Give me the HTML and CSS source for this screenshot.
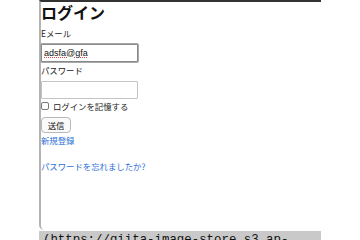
FILE: index.html
```html
<!DOCTYPE html>
<html lang="ja">
<head>
    <meta charset="UTF-8">
    <meta name="viewport" content="width=device-width, initial-scale=1.0">
    <title>ログイン</title>
    <link rel="stylesheet" href="styles.css">
</head>
<body>

    <div class="shot">
        <div class="frame">
            <h1>ログイン</h1>
            <form class="login-form">
                <label class="field-label" for="email">Eメール</label>
                <input type="text" id="email" class="text-input focused" value="adsfa@gfa">
                <label class="field-label" for="password">パスワード</label>
                <input type="password" id="password" class="text-input">
                <label class="remember">
                    <input type="checkbox" class="check">
                    <span>ログインを記憶する</span>
                </label>
                <button type="button" class="submit-btn">送信</button>
            </form>
            <a href="#" class="link signup">新規登録</a>
            <a href="#" class="link forgot">パスワードを忘れましたか?</a>
        </div>
        <div class="code-line">(https://qiita-image-store.s3.ap-</div>
    </div>

</body>
</html>
```

FILE: styles.css
```css
body {
    margin: 0;
    background-color: #fff;
    font-family: "Noto Sans CJK JP", "Noto Sans", sans-serif;
    color: #1a1a1a;
    overflow: hidden;
}
.shot {
    margin-left: 39px;
    width: 282px;
}
.frame {
    height: 230px;
    box-sizing: border-box;
    border-top: 2px solid #333;
    border-left: 2px solid #b4b4b4;
    border-bottom-left-radius: 5px;
    display: flex;
    flex-direction: column;
    align-items: flex-start;
}
h1 {
    margin: 0;
    font-size: 16px;
    line-height: 20px;
    font-weight: bold;
    color: #111;
}
.login-form {
    display: flex;
    flex-direction: column;
    align-items: flex-start;
}
.field-label {
    font-size: 8.4px;
    line-height: 10px;
    margin-top: 6px;
}
.field-label + .text-input {
    margin-top: 6px;
}
.login-form .field-label:nth-of-type(2) {
    margin-top: 3px;
}
.text-input {
    width: 97px;
    height: 18px;
    box-sizing: border-box;
    margin: 0;
    padding: 0 2px;
    border: 1px solid #c4c4c4;
    border-radius: 1px;
    font-family: "Liberation Sans", Arial, sans-serif;
    font-size: 9px;
    color: #111;
    outline: none;
}
.text-input.focused {
    border-color: #8a8a8a;
    box-shadow: 0 0 0 1px #a8a8a8;
    text-decoration: underline dotted #e04040;
}
.remember {
    display: flex;
    align-items: center;
    gap: 4px;
    margin-top: 2px;
    font-size: 8.4px;
    line-height: 10px;
}
.check {
    appearance: none;
    width: 8px;
    height: 8px;
    margin: 0;
    border: 1px solid #7a7a7a;
    border-radius: 2px;
    background: #fff;
}
.submit-btn {
    margin-top: 6px;
    width: 30px;
    height: 16px;
    padding: 0;
    border: 1px solid #b8b8b8;
    border-radius: 4px;
    background-color: #fafafa;
    font-family: "Noto Sans CJK JP", sans-serif;
    font-size: 8.4px;
    color: #111;
}
.link {
    font-size: 8.4px;
    line-height: 10px;
    color: #2a6fd6;
    text-decoration: none;
}
.signup {
    margin-top: 2px;
}
.forgot {
    margin-top: 16px;
}
.code-line {
    height: 9px;
    margin-top: 1px;
    padding-left: 4px;
    background-color: #c9c9c9;
    font-family: "Liberation Mono", monospace;
    font-size: 12.4px;
    line-height: 18px;
    color: #111;
    white-space: nowrap;
    overflow: hidden;
}
```
